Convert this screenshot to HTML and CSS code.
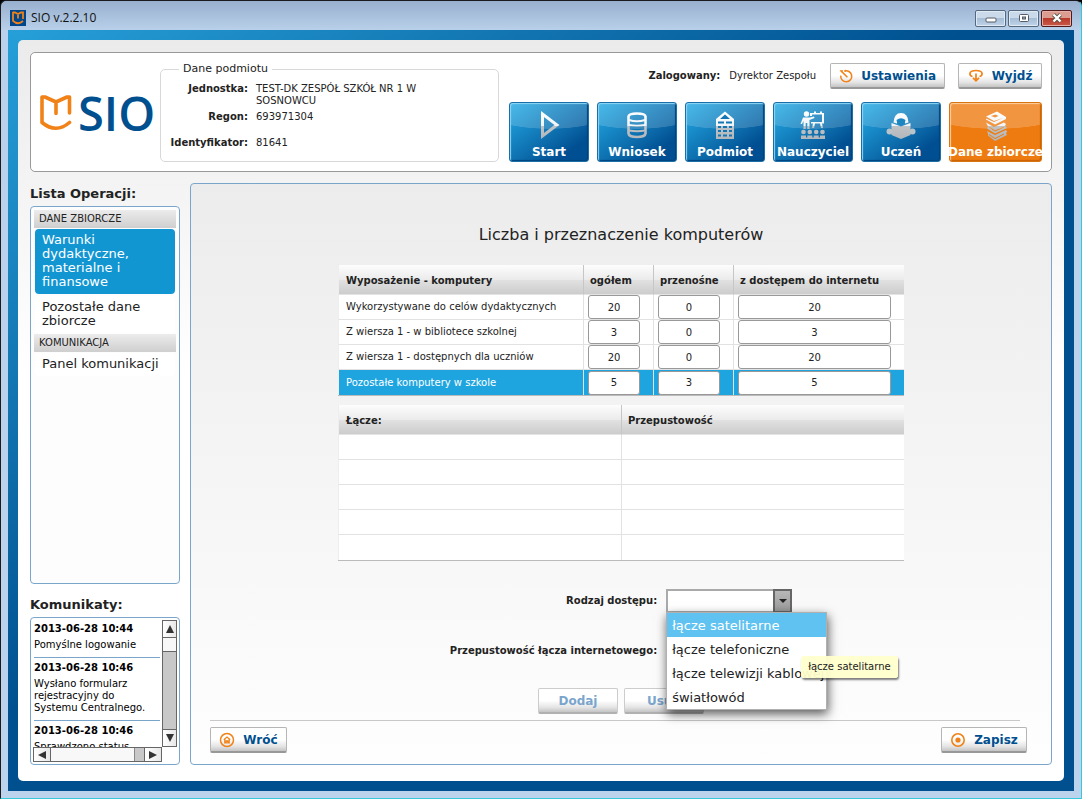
FILE: index.html
```html
<!DOCTYPE html>
<html lang="pl">
<head>
<meta charset="utf-8">
<title>SIO v.2.2.10</title>
<link rel="stylesheet" href="styles.css">
</head>
<body>
<div class="window">
  <header class="titlebar">
    <svg class="app-icon" width="16" height="16" viewBox="0 0 16 16"><rect width="16" height="16" fill="#00468a"/><path d="M3 2v8.800Q8 15.500 13 11M2.500 2.500H5L8 4l3-1.500h2V9M8 4v4.500" fill="none" stroke="#f08218" stroke-width="1.800"/></svg>
    <span class="window-title">SIO v.2.2.10</span>
    <div class="window-buttons">
      <button class="win-btn" aria-label="Minimalizuj"><svg width="12" height="10" viewBox="0 0 12 10"><rect x="1" y="5" width="10" height="4" rx="1" fill="#fff" stroke="#555b66"/></svg></button>
      <button class="win-btn" aria-label="Maksymalizuj"><svg width="12" height="10" viewBox="0 0 12 10"><rect x="1.500" y="1.500" width="9" height="7" rx="1" fill="#fff" stroke="#555b66"/><rect x="4.500" y="4" width="3" height="2" fill="#9ab" stroke="#555b66"/></svg></button>
      <button class="win-btn win-close" aria-label="Zamknij"><svg width="12" height="10" viewBox="0 0 12 10"><path d="M2.500 1.500l7 7M9.500 1.500l-7 7" stroke="#554" stroke-width="4"/><path d="M2.500 1.500l7 7M9.500 1.500l-7 7" stroke="#fff" stroke-width="2.400"/></svg></button>
    </div>
  </header>
  <div class="frame">
    <div class="page">
      <section class="header-card">
        <div class="logo">
          <svg width="32" height="36" viewBox="0 0 32 36"><path d="M2 2v25.500Q16 39 29.500 27.500M2 2h3l11 5 11-5h2.500v16M16 7v11.500" fill="none" stroke="#f08218" stroke-width="3.600" stroke-linecap="round" stroke-linejoin="round"/></svg>
          <span class="logo-text">SIO</span>
        </div>
        <fieldset class="subject">
          <legend>Dane podmiotu</legend>
          <dl>
            <dt>Jednostka:</dt><dd>TEST-DK ZESPÓŁ SZKÓŁ NR 1 W SOSNOWCU</dd>
            <dt>Regon:</dt><dd>693971304</dd>
            <dt class="spaced">Identyfikator:</dt><dd class="spaced">81641</dd>
          </dl>
        </fieldset>
        <div class="header-right">
          <div class="user-row">
            <span class="user"><b>Zalogowany:</b><span>Dyrektor Zespołu</span></span>
            <button class="btn btn-settings"><svg width="16" height="16" viewBox="0 0 16 16" fill="none" stroke="#f08218" stroke-width="1.700"><path d="M6 2.500a6.200 6.200 0 1 1-4 5M9.500 9.500L2.500 2.500"/><path d="M1 2.200h3.500M7 1v2.500" stroke-width="1.200"/></svg>Ustawienia</button>
            <button class="btn btn-exit"><svg width="16" height="16" viewBox="0 0 16 16" fill="none" stroke="#f08218" stroke-width="1.700"><path d="M4.500 8.500Q1.500 8 2 5 3 2.500 8 2.500t6 2.500q.5 3-2.500 3.500M8 5.500v7M5 9.800l3 3 3-3"/></svg>Wyjdź</button>
          </div>
          <nav class="tiles">
            <button class="tile"><svg width="32" height="32" viewBox="0 0 32 32"><path d="M9.500 4v22L24 15z" fill="none" stroke="url(#ico)" stroke-width="3"/></svg>Start</button>
            <button class="tile"><svg width="32" height="32" viewBox="0 0 32 32" fill="none" stroke="url(#ico)"><path d="M7.500 6.500Q8 3.500 16 3.500t8.500 3v17Q24 27 16 27t-8.500-3.500z" stroke-width="2.600"/><path d="M8 10q8 2.500 16 0M8 15q8 1.500 16 0M8 20.500q8 1.500 16 0" stroke-width="2.200"/></svg>Wniosek</button>
            <button class="tile"><svg width="32" height="32" viewBox="0 0 32 32"><path d="M7 9l9-7.500L25 9v20H7z" fill="url(#ico)"/><path d="M11 9l5-4.500L21 9zM9 11.500h6v2H9zM17 11.500h6v2h-6zM9 16h3v2H9zM14 16h4v2h-4zM20 16h3v2h-3zM9 20h3v2H9zM14 20h4v2h-4zM20 20h3v2h-3zM9 24.500h3v2H9zM14 24.500h4v2h-4zM20 24.500h3v2h-3z" fill="#1376b4"/></svg>Podmiot</button>
            <button class="tile"><svg width="32" height="32" viewBox="0 0 32 32"><g fill="url(#ico)"><circle cx="9.500" cy="4" r="2.700"/><path d="M6 7.500h7l4-1 .5 1.500-5 2V19h-2.200v-6H8.700v6H6.500v-8L5 14H3.500z"/><path d="M13 3h4V1.500h2V3h4V1.500h2V3h2v10.500h-2l1 4.500h-2l-1-4.500h-5L17 18h-2l1-4.500h-2V12h11V4.500H15V6h-2z"/><circle cx="6.500" cy="22" r="2.300"/><circle cx="12.800" cy="22" r="2.300"/><circle cx="19.200" cy="22" r="2.300"/><circle cx="25.500" cy="22" r="2.300"/><path d="M4 29v-3.500h5V29zM10.300 29v-3.500h5V29zM16.700 29v-3.500h5V29zM23 29v-3.500h5V29z"/><path d="M4 27.500h24V29H4z"/></g></svg>Nauczyciel</button>
            <button class="tile"><svg width="32" height="32" viewBox="0 0 32 32"><path d="M8.500 12.500Q9 3 16 3t7.500 9.500l-3.500 1q0-4-4-4.500-4 .5-4 4.500z" fill="url(#ico)"/><path d="M11.500 10q4.500-3.500 9 0l-1 4-3.500 2-3.500-2z" fill="#1b86c2"/><path d="M6.500 13l9.500 3.500 9.500-3.500v12L16 29l-9.500-4z" fill="url(#ico)"/><circle cx="4.500" cy="21.500" r="3" fill="#b9c3ca"/><circle cx="27.500" cy="21.500" r="3" fill="#b9c3ca"/></svg>Uczeń</button>
            <button class="tile tile-active"><svg width="32" height="32" viewBox="0 0 32 32" fill="url(#ico)"><path d="M6 6.500L17 1.500l9 5.500v2l-11 5.500L6 9.500v-1l8 3.500 9-4-9 3zM11 6l4 1.500 3.500-1.500-3-1.500z" fill-rule="evenodd"/><path d="M6 12.500l8 4.500 10-4.500 2 1.500-1 2 2 2-12 5.500-8-5 1-2zM10 17l5 3.500 9-4v1l-9 4-6-4z" fill-rule="evenodd"/><path d="M7 21l8 4 11-5 1 1.500-1 2 1 1.500-12 6-7-5.500v-2zM9 24l6 4 9-4.500v1l-9 4.500-6-4z" fill-rule="evenodd"/></svg>Dane zbiorcze</button>
          </nav>
        </div>
      </section>
      <div class="body-row">
        <aside class="sidebar">
          <h2>Lista Operacji:</h2>
          <nav class="operations">
            <h3>DANE ZBIORCZE</h3>
            <a href="#" class="op op-active">Warunki dydaktyczne, materialne i finansowe</a>
            <a href="#" class="op">Pozostałe dane zbiorcze</a>
            <h3>KOMUNIKACJA</h3>
            <a href="#" class="op">Panel komunikacji</a>
          </nav>
          <h2 class="messages-title">Komunikaty:</h2>
          <div class="messages">
            <div class="message-list">
              <p><b>2013-06-28 10:44</b>Pomyślne logowanie</p>
              <p><b>2013-06-28 10:46</b>Wysłano formularz rejestracyjny do Systemu Centralnego.</p>
              <p><b>2013-06-28 10:46</b>Sprawdzono status</p>
            </div>
            <div class="vbar">
              <button aria-label="W górę"><svg width="8" height="8" viewBox="0 0 8 8"><path d="M0 8L4 0l4 8z"/></svg></button>
              <div class="thumb"></div>
              <button class="last" aria-label="W dół"><svg width="8" height="8" viewBox="0 0 8 8"><path d="M0 0l4 8 4-8z"/></svg></button>
            </div>
            <div class="hbar">
              <button aria-label="W lewo"><svg width="8" height="8" viewBox="0 0 8 8"><path d="M8 0L0 4l8 4z"/></svg></button>
              <div class="thumb"></div>
              <button class="last" aria-label="W prawo"><svg width="8" height="8" viewBox="0 0 8 8"><path d="M0 0l8 4-8 4z"/></svg></button>
            </div>
          </div>
        </aside>
        <main class="content">
          <h1>Liczba i przeznaczenie komputerów</h1>
          <table class="grid computers">
            <colgroup><col class="c-name"><col class="c-total"><col class="c-port"><col class="c-net"></colgroup>
            <thead><tr><th>Wyposażenie - komputery</th><th>ogółem</th><th>przenośne</th><th>z dostępem do internetu</th></tr></thead>
            <tbody>
              <tr><td>Wykorzystywane do celów dydaktycznych</td><td><input aria-label="ogółem" value="20"></td><td><input aria-label="przenośne" value="0"></td><td><input aria-label="z dostępem do internetu" value="20"></td></tr>
              <tr><td>Z wiersza 1 - w bibliotece szkolnej</td><td><input aria-label="ogółem" value="3"></td><td><input aria-label="przenośne" value="0"></td><td><input aria-label="z dostępem do internetu" value="3"></td></tr>
              <tr><td>Z wiersza 1 - dostępnych dla uczniów</td><td><input aria-label="ogółem" value="20"></td><td><input aria-label="przenośne" value="0"></td><td><input aria-label="z dostępem do internetu" value="20"></td></tr>
              <tr class="selected"><td>Pozostałe komputery w szkole</td><td><input aria-label="ogółem" value="5"></td><td><input aria-label="przenośne" value="3"></td><td><input aria-label="z dostępem do internetu" value="5"></td></tr>
            </tbody>
          </table>
          <table class="grid links">
            <thead><tr><th>Łącze:</th><th>Przepustowość</th></tr></thead>
            <tbody>
              <tr><td></td><td></td></tr>
              <tr><td></td><td></td></tr>
              <tr><td></td><td></td></tr>
              <tr><td></td><td></td></tr>
              <tr><td></td><td></td></tr>
            </tbody>
          </table>
          <form class="access">
            <label for="access-type">Rodzaj dostępu:</label>
            <div class="combo">
              <select id="access-type"><option></option></select>
              <span class="combo-arrow"><svg width="8" height="4" viewBox="0 0 8 4"><path d="M0 0h8L4 4z" fill="#222"/></svg></span>
              <ul class="popup" role="listbox" aria-label="Rodzaj dostępu">
                <li role="option" aria-selected="true" class="hot">łącze satelitarne</li>
                <li role="option">łącze telefoniczne</li>
                <li role="option">łącze telewizji kablowej</li>
                <li role="option">światłowód</li>
              </ul>
              <div class="tooltip" role="tooltip">łącze satelitarne</div>
            </div>
            <label for="bandwidth">Przepustowość łącza internetowego:</label>
            <input id="bandwidth" class="bandwidth">
            <div class="form-buttons">
              <button type="button" class="btn btn-disabled" disabled>Dodaj</button>
              <button type="button" class="btn btn-disabled" disabled>Usuń</button>
            </div>
          </form>
          <hr class="rule">
          <footer class="actions">
            <button class="btn"><svg width="16" height="16" viewBox="0 0 16 16" fill="none" stroke="#f08218"><circle cx="8" cy="8" r="6.500" stroke-width="1.500"/><path d="M4.800 7.800L8 5l3.200 2.800M5.800 7v3.800h1.400V9h1.600v1.800h1.400V7" stroke-width="1.300"/></svg>Wróć</button>
            <button class="btn btn-save"><svg width="16" height="16" viewBox="0 0 16 16"><circle cx="8" cy="8" r="6.200" fill="none" stroke="#f08218" stroke-width="1.600"/><circle cx="8" cy="8" r="2.600" fill="#f08218"/></svg>Zapisz</button>
          </footer>
        </main>
      </div>
    </div>
  </div>
</div>
<svg class="defs" width="0" height="0" aria-hidden="true"><defs><linearGradient id="ico" gradientUnits="userSpaceOnUse" x1="0" y1="0" x2="0" y2="32"><stop offset="0" stop-color="#fff"/><stop offset=".5" stop-color="#f0f4f7"/><stop offset=".51" stop-color="#bfc3c6"/><stop offset="1" stop-color="#b0b4b8"/></linearGradient></defs></svg>
</body>
</html>
```
FILE: styles.css
```css
* { box-sizing: border-box; }
body, h1, h2, h3, p, ul, dl, dd { margin: 0; padding: 0; }
body {
  font: 10px/12px "DejaVu Sans", Verdana, sans-serif;
  color: #222;
  background: #000;
}
button, input, select { font: inherit; color: inherit; margin: 0; }
.defs { position: absolute; }

.window {
  min-height: 100vh;
  display: flex;
  flex-direction: column;
  padding: 0 7px 7px;
  border: 1px solid #1b1b1f;
  border-right-color: #38c8dc;
  border-bottom-color: #38c8dc;
  border-radius: 6px 6px 0 0;
  background: linear-gradient(#98b0ce, #b9d1ea 30px, #bcd3ee);
}
.titlebar {
  height: 29px;
  display: flex;
  align-items: center;
  gap: 5px;
  padding: 5px 2px 0 2px;
}
.window-title { flex: 1; font: 12px/16px "Open Sans", sans-serif; color: #111; }
.window-buttons { display: flex; gap: 2px; }
.win-btn {
  width: 31px;
  height: 17px;
  padding: 0;
  display: flex;
  align-items: center;
  justify-content: center;
  border: 1px solid #56687f;
  border-radius: 2px;
  background: linear-gradient(#cbdaea 0 50%, #a5bdd6 50%, #c0d4e8);
  box-shadow: inset 0 0 0 1px #dfeaf5;
}
.win-close {
  border-color: #501a1c;
  background: linear-gradient(#dc9c90 0 45%, #b83a2a 50%, #cc5a48);
  box-shadow: inset 0 0 0 1px #e5b0a8;
}
.frame {
  flex: 1;
  display: flex;
  padding: 10px;
  background: linear-gradient(to bottom right, #269fd8, #00508f 45%);
}
.page {
  flex: 1;
  min-width: 0;
  display: flex;
  flex-direction: column;
  gap: 11px;
  padding: 12px 12px 16px;
  border-radius: 5px;
  background: linear-gradient(#ebebeb, #fff 45%);
}

.header-card {
  min-height: 120px;
  display: flex;
  padding: 10px 9px 9px;
  border: 1px solid #999;
  border-radius: 5px;
  background: #fff;
}
.logo { display: flex; align-items: center; gap: 6px; width: 120px; flex: none; }
.logo-text { font: 600 47px/48px "Open Sans", sans-serif; color: #00508f; }
.subject {
  width: 339px;
  min-width: 0;
  margin: 0;
  padding: 8px 0 0 1px;
  border: 1px solid #d8d8d8;
  border-radius: 5px;
}
.subject legend { margin-left: 17px; padding: 0 4px; font-size: 11px; line-height: 12px; }
.subject dl { display: grid; grid-template-columns: 86px 190px; gap: 4px 8px; }
.subject dt { font-weight: bold; text-align: right; }
.spaced { padding-top: 10px; }

.header-right { margin-left: auto; display: flex; flex-direction: column; gap: 13px; }
.user-row { display: flex; align-items: center; justify-content: flex-end; }
.user { display: flex; gap: 9px; margin-right: 14px; }
.btn {
  height: 26px;
  min-width: 77px;
  padding: 0 8px;
  display: flex;
  align-items: center;
  justify-content: center;
  gap: 8px;
  border: 1px solid #b5b5b5;
  border-bottom: 2px solid #989898;
  border-radius: 2px;
  background: linear-gradient(#fff 50%, #e4e4e4 80%, #c4c4c4);
  color: #00508f;
  font-size: 12px;
  font-weight: bold;
}
.btn-settings { width: 115px; }
.btn-exit { width: 84px; margin-left: 13px; }
.btn-save { min-width: 86px; }
.btn-disabled { width: 80px; color: #7aa5cc; border-color: #ccc; border-bottom-color: #b0b0b0; }

.tiles { display: flex; gap: 8px; }
.tile {
  width: 80px;
  height: 60px;
  padding: 7px 0 2px;
  display: flex;
  flex-direction: column;
  align-items: center;
  justify-content: space-between;
  border: 1px solid #1a6fa8;
  border-radius: 3px;
  color: #fff;
  font-size: 12px;
  line-height: 14px;
  font-weight: bold;
  white-space: nowrap;
  background:
    radial-gradient(ellipse 75px 26px at 50% 0, rgba(255,255,255,.16) 98%, transparent),
    linear-gradient(145deg, #22a7e2 5%, #0b68a8 60%, #004f92 80%);
  box-shadow: inset 1px 1px 1px #8fd6f5, inset -1px -1px 1px #00437c;
}
.tile-active {
  width: 93px;
  border-color: #d87412;
  background:
    radial-gradient(ellipse 85px 26px at 50% 0, rgba(255,255,255,.2) 98%, transparent),
    #ee7b10;
  box-shadow: inset 1px 1px 1px #fcd0a0, inset -1px -1px 1px #c96206;
}

.body-row { flex: 1; display: flex; gap: 10px; }
.sidebar { width: 150px; flex: none; display: flex; flex-direction: column; }
.sidebar h2 { font-size: 13px; line-height: 16px; margin: 3px 0 4px; }
.operations {
  flex: 1;
  padding: 3px;
  border: 1px solid #7ba6cc;
  border-radius: 4px;
  background: #fdfdfd;
}
.operations h3 {
  height: 18px;
  padding: 0 5px;
  font-size: 10px;
  line-height: 17px;
  font-weight: normal;
  background: linear-gradient(#ececec, #d2d2d2);
  border-bottom: 2px solid #d0d0d0;
}
.op {
  display: block;
  margin: 1px;
  padding: 4px 7px 5px;
  border-radius: 4px;
  font-size: 13px;
  line-height: 14px;
  color: #222;
  text-decoration: none;
  background: #fff;
}
.op-active { color: #fff; background: #1296d2; }
.op-active + .op { margin-top: 2px; }
.sidebar .messages-title { margin: 13px 0 4px; }
.messages {
  height: 148px;
  padding: 2px;
  display: grid;
  grid-template: 127px 15px / 1fr 15px;
  border: 1px solid #7ba6cc;
  border-radius: 4px;
  background: #fff;
}
.message-list { overflow: hidden; padding: 0 2px 0 1px; color: #000; min-width: 0; }
.message-list p { padding: 3px 0 6px; border-bottom: 1px solid #7ba6cc; }
.message-list p + p { padding-top: 4px; }
.message-list b { display: block; line-height: 12px; margin-bottom: 4px; }
.vbar, .hbar { display: flex; border: 1px solid #666; background: #c8c8c8; }
.vbar { flex-direction: column; }
.vbar button, .hbar button {
  flex: none;
  padding: 0;
  display: flex;
  align-items: center;
  justify-content: center;
  border: 0 solid #666;
  background: linear-gradient(90deg, #fff, #e8e8e8);
}
.vbar svg, .hbar svg { fill: #333; }
.vbar button { height: 17px; border-bottom-width: 1px; }
.vbar .last { margin-top: auto; border-width: 1px 0 0; }
.vbar .thumb { height: 14px; background: #f8f8f8; border-bottom: 1px solid #666; }
.hbar button { width: 17px; border-right-width: 1px; }
.hbar .thumb { flex: 1; margin-right: 9px; background: #f8f8f8; border-right: 1px solid #888; }
.hbar .last { border-width: 0 0 0 1px; }

.content {
  flex: 1;
  min-width: 0;
  display: flex;
  flex-direction: column;
  align-items: center;
  padding: 41px 24px 11px 19px;
  border: 1px solid #7ba6cc;
  border-radius: 4px;
  background: linear-gradient(#ececec, #fefefe);
}
.content > * { margin-left: 5px; }
h1 { font-size: 16px; line-height: 20px; font-weight: normal; }
.grid {
  width: 566px;
  table-layout: fixed;
  border-collapse: separate;
  border-spacing: 0;
  border-bottom: 1px solid #bbb;
}
.grid th {
  height: 30px;
  padding: 2px 6px 0;
  text-align: left;
  border-left: 1px solid #c6c6c6;
  border-bottom: 1px solid #e4e4e4;
  background: linear-gradient(#fdfdfd, #ebebeb 50%, #e2e2e2 51%, #ccc);
}
.grid td {
  height: 25px;
  padding: 0 4px;
  border-left: 1px solid #e2e2e2;
  border-bottom: 1px solid #e2e2e2;
  background: #fff;
}
.grid td:first-child, .grid th:first-child { padding-left: 7px; white-space: nowrap; }
.grid tr > :first-child { border-left-color: #eee; }
.grid tbody tr:last-child td { border-bottom: 0; }
.computers { margin-top: 20px; }
.links { margin-top: 9px; }
.c-name { width: 245px; }
.c-total { width: 70px; }
.c-port { width: 80px; }
.grid .selected td { background: #1ea5e0; color: #fff; }
.grid input {
  display: block;
  width: calc(100% - 9px);
  height: 24px;
  padding: 0;
  text-align: center;
  color: #222;
  background: #fff;
  border: 1px solid #999;
  border-radius: 3px;
}
.access {
  display: grid;
  grid-template-columns: auto 126px;
  gap: 26px 9px;
  align-items: center;
  margin-top: 28px;
}
.access label { text-align: right; font-weight: bold; }
.combo { position: relative; display: flex; }
.combo select {
  appearance: none;
  width: 126px;
  height: 24px;
  border: 2px solid #aaa;
  border-radius: 0;
  background: #fff;
}
.combo-arrow {
  position: absolute;
  top: 0;
  right: 0;
  width: 19px;
  height: 24px;
  display: flex;
  align-items: center;
  justify-content: center;
  border: 2px solid #666;
  background: linear-gradient(#b8b8b8, #9a9a9a);
  pointer-events: none;
}
.popup {
  position: absolute;
  z-index: 1;
  top: 23px;
  left: 0;
  width: 161px;
  list-style: none;
  border: 1px solid #b0b0b0;
  background: #fff;
  box-shadow: 1px 4px 10px rgba(0,0,0,.65);
}
.popup li { height: 24px; padding: 0 5px; font-size: 13px; line-height: 25px; white-space: nowrap; }
.popup .hot { color: #fff; background: #5fc2f0; }
.tooltip {
  position: absolute;
  z-index: 2;
  top: 67px;
  left: 135px;
  padding: 5px 7px;
  white-space: nowrap;
  border-radius: 3px;
  background: rgba(255,255,204,.95);
  box-shadow: 1px 2px 2px rgba(0,0,0,.5);
}
.bandwidth { width: 126px; height: 24px; border: 1px solid #999; border-radius: 3px; }
.form-buttons { grid-column: 1 / -1; display: flex; justify-content: center; gap: 6px; margin-top: -1px; }
.content .rule {
  align-self: stretch;
  margin: auto 7px 0 0;
  border: 0;
  border-top: 1px solid #c8c8c8;
}
.content .actions {
  align-self: stretch;
  display: flex;
  justify-content: space-between;
  margin: 0;
  padding-top: 6px;
}
```
